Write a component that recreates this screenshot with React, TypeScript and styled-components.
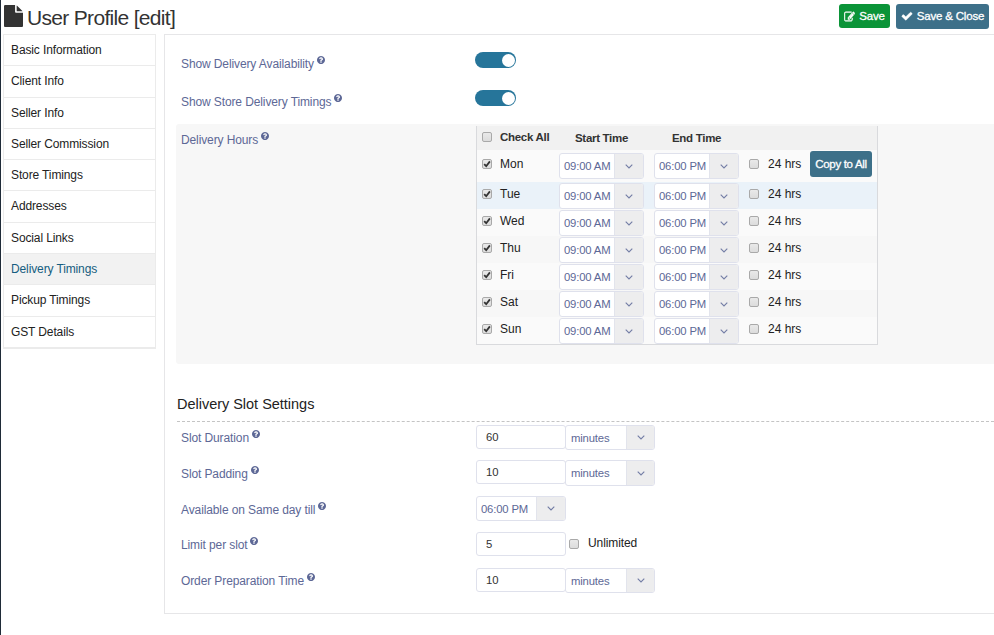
import React from "react";
import styled, { createGlobalStyle } from "styled-components";

const GlobalStyle = createGlobalStyle`
  *, *::before, *::after { box-sizing: border-box; }
  body {
    margin: 0;
    background: #fff;
    color: #222;
    font-family: "Liberation Sans", Arial, sans-serif;
    font-size: 12px;
    line-height: 16px;
    overflow: hidden;
  }
`;

const Page = styled.div`
  height: 635px;
  border-left: 1px solid #1f2b38;
  display: flex;
  flex-direction: column;
`;

const Header = styled.header`
  height: 34px;
  display: flex;
  align-items: flex-start;
  padding: 4px 5px 0 3px;
`;

const Title = styled.h1`
  margin: 0 auto 0 0;
  display: flex;
  font-size: 21px;
  font-weight: 400;
  line-height: 27px;
  letter-spacing: -0.68px;
  color: #333;
  white-space: nowrap;

  svg { margin: 1px 4px 0 0; }
`;

const Button = styled.button<{ $color: string; $w: number; $h: number; $tight?: boolean }>`
  display: inline-flex;
  align-items: center;
  justify-content: center;
  gap: 4px;
  width: ${(p) => p.$w}px;
  height: ${(p) => p.$h}px;
  padding: 0 0 ${(p) => (p.$h === 25 ? 1 : 0)}px;
  border: 0;
  border-radius: 3px;
  background: ${(p) => p.$color};
  color: #fff;
  font: 11.5px "Liberation Sans", Arial, sans-serif;
  letter-spacing: ${(p) => (p.$tight ? -0.32 : -0.2)}px;
  -webkit-text-stroke: 0.3px #fff;
  white-space: nowrap;
`;

const Actions = styled.div`
  display: flex;
  gap: 6px;
`;

const Body = styled.div`
  display: flex;
  align-items: flex-start;
  gap: 8px;
  padding-left: 2px;
`;

const Sidebar = styled.nav`
  width: 153px;
  height: 315px;
  display: flex;
  flex-direction: column;
  border: 1px solid #ebebeb;
  border-bottom-width: 2px;
`;

const SideItem = styled.a<{ $active?: boolean }>`
  flex: 1;
  display: flex;
  align-items: center;
  padding: 0 0 0.4px 7px;
  letter-spacing: -0.12px;
  color: ${(p) => (p.$active ? "#155d80" : "#222")};
  background: ${(p) => (p.$active ? "#f2f2f2" : "#fff")};

  & + & { border-top: 1px solid #ebebeb; }
`;

const Panel = styled.main`
  flex: 1;
  height: 580px;
  padding: 9px 0 0 11px;
  border: 1px solid #e6e6e8;
  border-right: 0;
`;

const Row = styled.div<{ $h: number }>`
  display: grid;
  grid-template-columns: 300px 1fr;
  height: ${(p) => p.$h}px;
`;

const Block = styled(Row)`
  margin-top: 4px;
  background: #f7f7f7;
  border-radius: 3px 0 0 3px;
`;

const LabelText = styled.label<{ $top: number }>`
  display: flex;
  align-items: flex-start;
  gap: 3px;
  padding: ${(p) => p.$top}px 0 0 5px;
  color: #5d6896;
  letter-spacing: -0.11px;
  white-space: nowrap;

  svg { margin-top: 0.4px; }
`;

const Switch = styled.span`
  width: 41px;
  height: 16px;
  margin: 8px 0 0 -1px;
  padding: 1.5px;
  display: flex;
  justify-content: flex-end;
  border-radius: 8px;
  background: #26759a;

  &::after {
    content: "";
    width: 13px;
    height: 13px;
    border-radius: 50%;
    background: #fff;
  }
`;

const Hours = styled.div`
  width: 402px;
  height: 219px;
  margin-top: 2px;
  border: 1px solid #d9dadd;
  border-top: 0;
`;

const HoursRow = styled.div<{ $h: number; $bg: string }>`
  display: grid;
  grid-template-columns: 82px 95px 95px 61px 1fr;
  height: ${(p) => p.$h}px;
  background: ${(p) => p.$bg};
`;

const HoursHead = styled(HoursRow)`
  font-weight: 700;
  font-size: 11.5px;
  letter-spacing: -0.3px;
  line-height: 24px;
  color: #333;
`;

const HeadCell = styled.span<{ $indent: number }>`
  padding-left: ${(p) => p.$indent}px;
  white-space: nowrap;
`;

const CheckCell = styled.label<{ $left: number; $gap: number; $top: number }>`
  display: flex;
  align-items: flex-start;
  gap: ${(p) => p.$gap}px;
  padding: ${(p) => p.$top}px 0 0 ${(p) => p.$left}px;
  line-height: 16px;
  white-space: nowrap;
`;

const Box = styled.span`
  flex: none;
  width: 10px;
  height: 10px;
  margin-top: 3px;
  display: flex;
  align-items: center;
  justify-content: center;
  border: 1px solid #a9a9a9;
  border-radius: 2px;
  background: linear-gradient(#e9e9e9, #dcdcdc);
`;

const UnlimitedCell = styled(CheckCell)`
  letter-spacing: -0.1px;

  ${Box} { margin-top: 4px; }
`;

const SelectFrame = styled.span<{ $w: number; $h: number; $top: number }>`
  display: flex;
  width: ${(p) => p.$w}px;
  height: ${(p) => p.$h}px;
  margin-top: ${(p) => p.$top}px;
  border: 1px solid #dfe1ec;
  border-radius: 3px;
  overflow: hidden;
  background: #fff;
`;

const SelectValue = styled.span<{ $nudge: number; $indent: number }>`
  flex: 1;
  display: flex;
  align-items: center;
  padding-left: ${(p) => p.$indent}px;
  padding-top: ${(p) => p.$nudge}px;
  font-size: 11.3px;
  letter-spacing: -0.17px;
  color: #5d6896;
  white-space: nowrap;
`;

const SelectArrow = styled.span<{ $w: number }>`
  width: ${(p) => p.$w}px;
  display: flex;
  align-items: center;
  justify-content: center;
  background: #ededee;
  border-left: 1px solid #e2e4ec;
`;

const SectionTitle = styled.h2`
  height: 34px;
  margin: 24px 0 3px 1px;
  padding-top: 7px;
  border-bottom: 1px dashed #c4c4c4;
  font-size: 14.5px;
  font-weight: 400;
  line-height: 18px;
  letter-spacing: -0.02px;
  color: #222;
`;

const Controls = styled.div`
  display: flex;
  align-items: flex-start;
`;

const TextInput = styled.input`
  width: 90px;
  height: 24px;
  margin: 0;
  padding: 0 9px 1px;
  border: 1px solid #dfe1ec;
  border-radius: 3px;
  background: #fff;
  color: #333;
  font: 11.3px "Liberation Sans", Arial, sans-serif;

  & + ${SelectFrame} { margin-left: -1px; }
`;

const CopySlot = styled.div`
  padding-top: 1px;
`;

const GLYPHS = {
  file: "M1152 512v-472q22 14 36 28l408 408q14 14 28 36h-472zm-128 32q0 40 28 68t68 28h544v1056q0 40-28 68t-68 28h-1344q-40 0-68-28t-28-68v-1600q0-40 28-68t68-28h800v544z",
  edit: "M888 1184l116-116-152-152-116 116v56h96v96h56zm440-720q-16-16-33 1l-350 350q-17 17-1 33t33-1l350-350q17-17 1-33zm80 594v190q0 119-84.5 203.5t-203.5 84.5h-832q-119 0-203.5-84.5t-84.5-203.5v-832q0-119 84.5-203.5t203.5-84.5h832q63 0 117 25 15 7 18 23 3 17-9 29l-49 49q-14 14-32 8-23-6-45-6h-832q-66 0-113 47t-47 113v832q0 66 47 113t113 47h832q66 0 113-47t47-113v-126q0-13 9-22l64-64q15-15 35-7t20 29zm-96-738l288 288-672 672h-288v-288zm444 132l-92 92-288-288 92-92q28-28 68-28t68 28l152 152q28 28 28 68t-28 68z",
  check: "M1671 566q0 40-28 68l-724 724-136 136q-28 28-68 28t-68-28l-136-136-362-362q-28-28-28-68t28-68l136-136q28-28 68-28t68 28l294 295 656-657q28-28 68-28t68 28l136 136q28 28 28 68z",
  help: "M1024 1376v-192q0-14-9-23t-23-9h-192q-14 0-23 9t-9 23v192q0 14 9 23t23 9h192q14 0 23-9t9-23zm256-672q0-88-55.5-163t-138.5-116-170-41q-243 0-371 213-15 24 8 42l132 100q7 6 19 6 16 0 25-12 53-68 86-92 34-24 86-24 48 0 85.5 26t37.5 59q0 38-20 61t-68 45q-63 28-115.5 86.5t-52.5 125.5v36q0 14 9 23t23 9h192q14 0 23-9t9-23q0-19 21.5-49.5t54.5-49.5q32-18 49-28.5t46-35 44.5-48 28-60.5 12.5-81zm384 192q0 209-103 385.5t-279.5 279.5-385.5 103-385.5-103-279.5-279.5-103-385.5 103-385.5 279.5-279.5 385.5-103 385.5 103 279.5 279.5 103 385.5z",
};

type GlyphProps = { name: keyof typeof GLYPHS; w: number; h?: number; box?: string; weight?: number };

const Glyph = ({ name, w, h = w, box = "0 0 1792 1792", weight = 0 }: GlyphProps) => (
  <svg width={w} height={h} viewBox={box} preserveAspectRatio="none" fill="currentColor" stroke="currentColor" strokeWidth={weight}>
    <path d={GLYPHS[name]} />
  </svg>
);

const Label = ({ text, top }: { text: string; top: number }) => (
  <LabelText $top={top}>
    {text}
    <Glyph name="help" w={8} box="128 128 1536 1536" />
  </LabelText>
);

type SelectProps = { value: string; w?: number; h?: number; top?: number };

const Select = ({ value, w = 85, h = 26, top = 0 }: SelectProps) => {
  const unit = value === "minutes";
  return (
    <SelectFrame $w={w} $h={h} $top={top}>
      <SelectValue $nudge={h === 25 ? 1 : 0} $indent={unit ? 5 : 4}>{value}</SelectValue>
      <SelectArrow $w={unit ? 28 : 29}>
        <svg width="8" height="5" viewBox="0 0 8 5" fill="none" stroke="#737da5" strokeWidth="1.1">
          <path d="M0.7 0.7L4 4L7.3 0.7" />
        </svg>
      </SelectArrow>
    </SelectFrame>
  );
};

const Check = ({ on }: { on?: boolean }) => (
  <Box>
    {on && (
      <svg width="8" height="8" viewBox="0 0 8 8" fill="none" stroke="#333" strokeWidth="1.8">
        <path d="M1.2 4.2L3.2 6.2L6.9 1.4" />
      </svg>
    )}
  </Box>
);

const MENU = ["Basic Information", "Client Info", "Seller Info", "Seller Commission", "Store Timings", "Addresses", "Social Links", "Delivery Timings", "Pickup Timings", "GST Details"];
const DAYS = ["Mon", "Tue", "Wed", "Thu", "Fri", "Sat", "Sun"];

const rowColor = (day: string, i: number) => (day === "Tue" ? "#eaf2f9" : i % 2 ? "#f7f7f7" : "#fafafa");

export default function App() {
  return (
    <>
      <GlobalStyle />
      <Page>
        <Header>
          <Title>
            <Glyph name="file" w={19} h={22} box="128 0 1536 1792" />
            User Profile [edit]
          </Title>
          <Actions>
            <Button $color="#0b9438" $w={51} $h={24}>
              <Glyph name="edit" w={11} box="-30 30 1850 1600" weight={70} />
              Save
            </Button>
            <Button $color="#3d7089" $w={93} $h={25}>
              <Glyph name="check" w={12} weight={60} />
              Save &amp; Close
            </Button>
          </Actions>
        </Header>
        <Body>
          <Sidebar>
            {MENU.map((item) => (
              <SideItem key={item} $active={item === "Delivery Timings"}>{item}</SideItem>
            ))}
          </Sidebar>
          <Panel>
            <Row $h={38}>
              <Label text="Show Delivery Availability" top={12} />
              <Switch />
            </Row>
            <Row $h={38}>
              <Label text="Show Store Delivery Timings" top={12} />
              <Switch />
            </Row>
            <Block $h={240}>
              <Label text="Delivery Hours" top={8} />
              <Hours>
                <HoursHead $h={24} $bg="#f1f1f1">
                  <CheckCell $left={5} $gap={8} $top={3}>
                    <Check />
                    Check All
                  </CheckCell>
                  <HeadCell $indent={16}>Start Time</HeadCell>
                  <HeadCell $indent={18}>End Time</HeadCell>
                </HoursHead>
                {DAYS.map((day, i) => {
                  const first = i === 0;
                  return (
                    <HoursRow key={day} $h={first ? 32 : 27} $bg={rowColor(day, i)}>
                      <CheckCell $left={5} $gap={8} $top={first ? 6 : 4}>
                        <Check on />
                        {day}
                      </CheckCell>
                      <Select value="09:00 AM" top={first ? 3 : 1} />
                      <Select value="06:00 PM" top={first ? 3 : 1} />
                      <CheckCell $left={0} $gap={9} $top={first ? 6 : 4}>
                        <Check />
                        24 hrs
                      </CheckCell>
                      {first && (
                        <CopySlot>
                          <Button $color="#3d7089" $w={62} $h={26} $tight>Copy to All</Button>
                        </CopySlot>
                      )}
                    </HoursRow>
                  );
                })}
              </Hours>
            </Block>
            <SectionTitle>Delivery Slot Settings</SectionTitle>
            <Row $h={35}>
              <Label text="Slot Duration" top={5} />
              <Controls>
                <TextInput defaultValue="60" />
                <Select value="minutes" w={90} h={25} />
              </Controls>
            </Row>
            <Row $h={36}>
              <Label text="Slot Padding" top={6} />
              <Controls>
                <TextInput defaultValue="10" />
                <Select value="minutes" w={90} h={26} />
              </Controls>
            </Row>
            <Row $h={36}>
              <Label text="Available on Same day till" top={6} />
              <Controls>
                <Select value="06:00 PM" w={90} h={25} />
              </Controls>
            </Row>
            <Row $h={36}>
              <Label text="Limit per slot" top={5} />
              <Controls>
                <TextInput defaultValue="5" />
                <UnlimitedCell $left={3} $gap={9} $top={3}>
                  <Check />
                  Unlimited
                </UnlimitedCell>
              </Controls>
            </Row>
            <Row $h={30}>
              <Label text="Order Preparation Time" top={5} />
              <Controls>
                <TextInput defaultValue="10" />
                <Select value="minutes" w={90} h={25} />
              </Controls>
            </Row>
          </Panel>
        </Body>
      </Page>
    </>
  );
}
